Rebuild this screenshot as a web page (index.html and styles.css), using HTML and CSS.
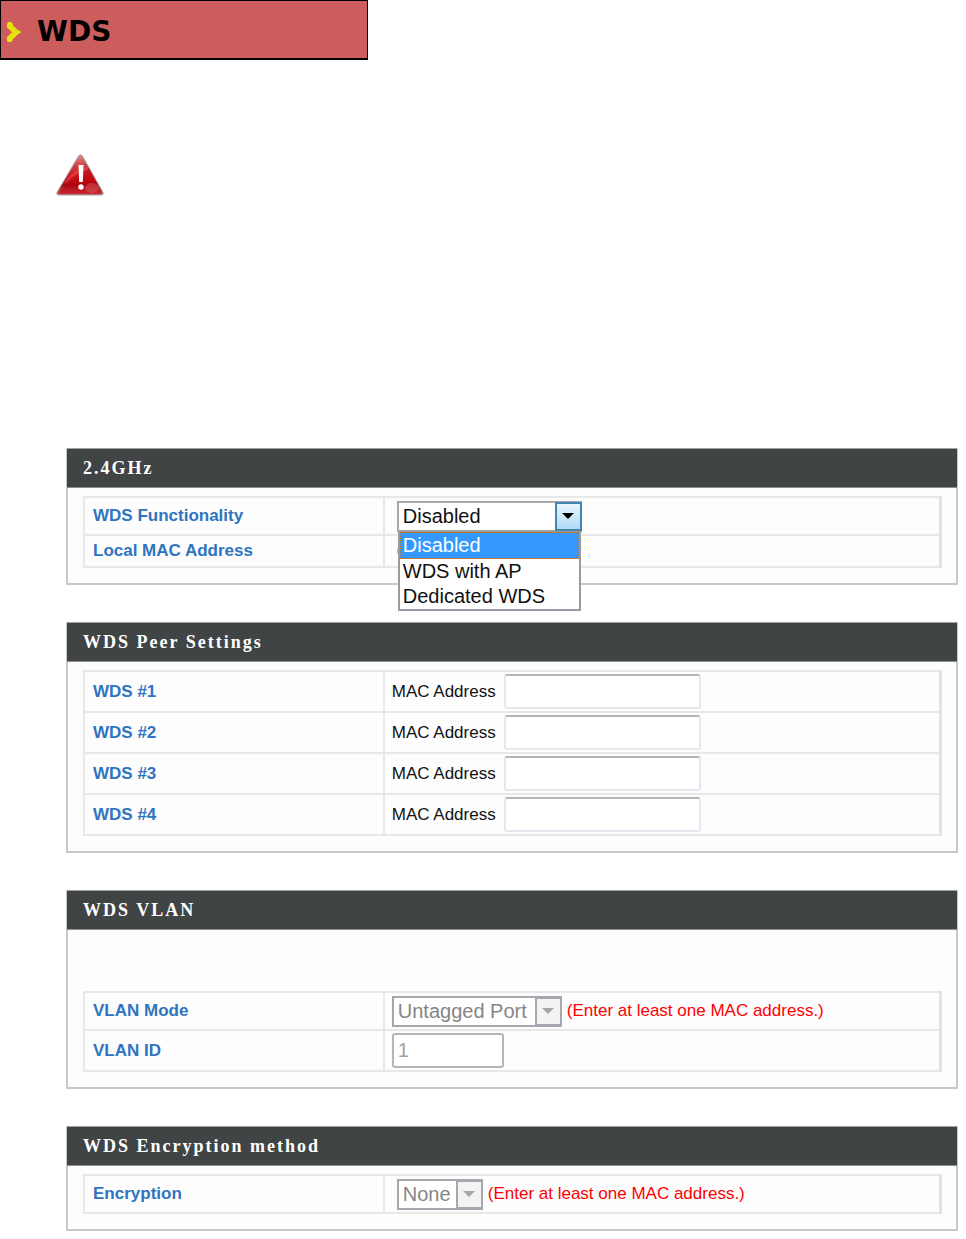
FILE: index.html
```html
<!DOCTYPE html>
<html lang="en">
<head>
<meta charset="utf-8">
<meta name="viewport" content="width=device-width, initial-scale=1">
<title>WDS</title>
<link rel="stylesheet" href="styles.css">
</head>
<body>
<header class="banner">
  <svg class="banner-arrow" viewBox="0 0 14 20" aria-hidden="true"><path d="M0 2 1 0H4L6 2V4L8 5 10 7.500 14 9.500V10.500L10 13 8 15.500 6 16.500V18L4 20H1L0 19V15L5 10.200 0 5.500Z" fill="#e6e00c"/></svg>
  <h1 class="banner-title">WDS</h1>
</header>

<main class="content">
  <svg class="warning" viewBox="0 0 48 42" role="img" aria-label="Warning">
    <defs>
      <linearGradient id="red" x1="0" y1="0" x2="0" y2="1">
        <stop offset="0" stop-color="#e08a8a"/>
        <stop offset="0.3" stop-color="#cf3a3e"/>
        <stop offset="0.55" stop-color="#d01820"/>
        <stop offset="0.75" stop-color="#a80a10"/>
        <stop offset="1" stop-color="#d8545c"/>
      </linearGradient>
    </defs>
    <path d="M22.5 2Q24.5-.5 26.5 2L47 38.5Q48 41 45 41H3Q0 41 1 38.5Z" fill="url(#red)" stroke="#9aa5a2" stroke-width="1"/>
    <path d="M3.5 38Q18 23 33 14L45 38Q46 40 43 40H5Q2 40 3.5 38Z" fill="#b80008" opacity="0.45"/>
    <path d="M9 29Q19 16 31 15" fill="none" stroke="#ef6b6b" stroke-width="2" opacity="0.4"/>
    <ellipse cx="36" cy="34" rx="7" ry="5" fill="#f08a90" opacity="0.3"/>
    <path d="M22.5 11H27.5L26.8 28H23.2Z" fill="#fff"/>
    <circle cx="25" cy="33" r="2.7" fill="#fff"/>
  </svg>

  <section class="panel">
    <h2 class="panel-title">2.4GHz</h2>
    <table class="grid">
      <tr class="row-medium">
        <th scope="row"><label for="wds-mode">WDS Functionality</label></th>
        <td class="indent">
          <div class="dropdown dropdown-open">
            <select id="wds-mode">
              <option selected>Disabled</option>
              <option>WDS with AP</option>
              <option>Dedicated WDS</option>
            </select>
            <span class="dropdown-button" aria-hidden="true"></span>
            <ul class="menu" role="listbox" aria-label="WDS Functionality">
              <li class="menu-item menu-item-active" role="option" aria-selected="true">Disabled</li>
              <li class="menu-item" role="option">WDS with AP</li>
              <li class="menu-item" role="option">Dedicated WDS</li>
            </ul>
          </div>
        </td>
      </tr>
      <tr class="row-short">
        <th scope="row">Local MAC Address</th>
        <td class="indent"><span class="mac-mark"></span></td>
      </tr>
    </table>
  </section>

  <section class="panel">
    <h2 class="panel-title">WDS Peer Settings</h2>
    <table class="grid">
      <tr class="row-tall">
        <th scope="row">WDS #1</th>
        <td><div class="field"><label class="mac-label" for="mac1">MAC Address</label><input class="mac-input" id="mac1" type="text"></div></td>
      </tr>
      <tr class="row-tall">
        <th scope="row">WDS #2</th>
        <td><div class="field"><label class="mac-label" for="mac2">MAC Address</label><input class="mac-input" id="mac2" type="text"></div></td>
      </tr>
      <tr class="row-tall">
        <th scope="row">WDS #3</th>
        <td><div class="field"><label class="mac-label" for="mac3">MAC Address</label><input class="mac-input" id="mac3" type="text"></div></td>
      </tr>
      <tr class="row-tall">
        <th scope="row">WDS #4</th>
        <td><div class="field"><label class="mac-label" for="mac4">MAC Address</label><input class="mac-input" id="mac4" type="text"></div></td>
      </tr>
    </table>
  </section>

  <section class="panel panel-spaced">
    <h2 class="panel-title">WDS VLAN</h2>
    <table class="grid">
      <tr class="row-medium">
        <th scope="row"><label for="vlan-mode">VLAN Mode</label></th>
        <td>
          <div class="field">
            <div class="dropdown dropdown-port">
              <select id="vlan-mode" disabled><option>Untagged Port</option></select>
              <span class="dropdown-button" aria-hidden="true"></span>
            </div>
            <span class="note">(Enter at least one MAC address.)</span>
          </div>
        </td>
      </tr>
      <tr class="row-tall">
        <th scope="row"><label for="vlan-id">VLAN ID</label></th>
        <td><div class="field"><input class="id-input" id="vlan-id" type="text" value="1" disabled></div></td>
      </tr>
    </table>
  </section>

  <section class="panel">
    <h2 class="panel-title">WDS Encryption method</h2>
    <table class="grid">
      <tr class="row-medium">
        <th scope="row"><label for="encryption">Encryption</label></th>
        <td class="indent">
          <div class="field">
            <div class="dropdown dropdown-none">
              <select id="encryption" disabled><option>None</option></select>
              <span class="dropdown-button" aria-hidden="true"></span>
            </div>
            <span class="note">(Enter at least one MAC address.)</span>
          </div>
        </td>
      </tr>
    </table>
  </section>
</main>
</body>
</html>
```
FILE: styles.css
```css
* {
  box-sizing: border-box;
}

body {
  margin: 0;
  background: #fff;
  color: #111;
  font: 17px/20px "Liberation Sans", Arial, sans-serif;
}

.banner {
  display: flex;
  align-items: center;
  gap: 16px;
  width: 368px;
  max-width: 100%;
  height: 60px;
  padding: 4px 6px 0;
  border: 1px solid #000;
  border-bottom-width: 2px;
  background: #cd5c5c;
}

.banner-arrow {
  width: 14px;
  height: 20px;
}

.banner-title {
  margin: 0;
  font: bold 28px/32px "DejaVu Sans", Verdana, sans-serif;
  color: #000;
}

.content {
  padding: 94px 8px 8px 66px;
}

.warning {
  display: block;
  width: 48px;
  height: 42px;
  margin: 0 0 252px -10px;
}

.panel {
  margin-bottom: 37px;
  padding: 0 14px 15px 15px;
  border: 2px solid #c8c8c8;
  border-top: 1px solid #a0a2a2;
  background: #fdfdfd;
}

.panel:last-child {
  margin-bottom: 0;
}

.panel-title {
  margin: 0 -15px 8px -16px;
  padding: 0 16px;
  border-bottom: 1px solid #8c8e8e;
  background: #404444;
  color: #fff;
  font: bold 18px/38px "Liberation Serif", "Times New Roman", serif;
  letter-spacing: 2px;
}

.panel-spaced .panel-title {
  margin-bottom: 61px;
}

.grid {
  width: 100%;
  table-layout: fixed;
  border-collapse: collapse;
}

.grid th,
.grid td {
  padding: 0 8px;
  border: 2px solid #e8e8e8;
  text-align: left;
  vertical-align: middle;
}

.grid th {
  width: 35%;
  color: #2f74c0;
}

.grid td {
  padding-left: 7px;
  border-right: 3px solid #e2e2e2;
}

.grid td.indent {
  padding-left: 12px;
}

.row-short {
  height: 32px;
}

.row-medium {
  height: 38px;
}

.row-tall {
  height: 41px;
}

.mac-mark {
  display: block;
  width: 8px;
  height: 10px;
  border: 2px solid #f0a050;
  border-radius: 50%;
}

.field {
  display: flex;
  align-items: center;
  gap: 5px;
}

.mac-label {
  min-width: 107px;
}

.note {
  color: #f00;
}

input {
  height: 35px;
  padding: 0 4px;
  border-radius: 3px;
  background: #fff;
  font: 20px/24px "Liberation Sans", Arial, sans-serif;
}

.mac-input {
  width: 197px;
  border: 2px solid #e3e7ee;
  border-top-color: #b4b5bb;
}

.id-input {
  width: 112px;
  border: 2px solid #b4b6b9;
  color: #a0a0a0;
}

.dropdown {
  position: relative;
  height: 31px;
}

.dropdown-open {
  width: 185px;
}

.dropdown-port {
  width: 170px;
}

.dropdown-none {
  width: 86px;
}

select {
  appearance: none;
  display: block;
  width: 100%;
  height: 100%;
  padding: 0 28px 0 4px;
  border: 2px solid #a5a8ae;
  border-radius: 0;
  background: #fff;
  color: #111;
  font: 20px/24px "Liberation Sans", Arial, sans-serif;
}

select:disabled {
  color: #858585;
  opacity: 1;
}

.dropdown-button {
  position: absolute;
  top: 1px;
  right: 0;
  bottom: 1px;
  display: grid;
  place-items: center;
  width: 27px;
  border: 2px solid #4484b0;
  background: linear-gradient(#e8f5fc, #b0dcf4);
  pointer-events: none;
}

.dropdown-button::after {
  content: "";
  border: 6px solid transparent;
  border-top-color: #000;
  border-bottom: 0;
}

select:disabled + .dropdown-button {
  border-color: #a5a8ae;
  background: #f3f3f3;
}

select:disabled + .dropdown-button::after {
  border-top-color: #a5a8a8;
}

.menu {
  position: absolute;
  z-index: 1;
  top: 30px;
  left: 1px;
  right: 1px;
  margin: 0;
  padding: 0;
  border: 2px solid #989ba3;
  border-top-width: 1px;
  background: #fff;
  list-style: none;
}

.menu-item {
  padding: 0 3px;
  color: #111;
  font-size: 20px;
  line-height: 25px;
}

.menu-item-active {
  padding: 0 2px;
  border: 1px dotted #c07830;
  background: #3399ff;
  color: #fff;
}
```
